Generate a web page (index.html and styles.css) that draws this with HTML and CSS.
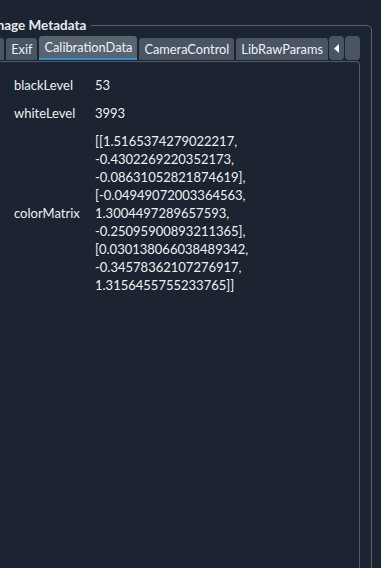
FILE: index.html
```html
<!DOCTYPE html>
<html lang="en">
<head>
    <meta charset="UTF-8">
    <meta name="viewport" content="width=device-width, initial-scale=1.0">
    <title>Image Metadata</title>
    <link rel="stylesheet" href="styles.css">
</head>
<body>
    <fieldset class="metadata">
        <legend>Image Metadata</legend>
        <div class="tabbar">
            <div class="tabs">
                <div class="tab">Info</div>
                <div class="tab">Exif</div>
                <div class="tab active">CalibrationData</div>
                <div class="tab">CameraControl</div>
                <div class="tab">LibRawParams</div>
            </div>
            <div class="scroll-btns">
                <button class="scroll-btn">
                    <svg width="6" height="9" viewBox="0 0 6 9"><path d="M5 0 L5 9 L0 4.5 Z" fill="#f5f8fa"/></svg>
                </button>
                <button class="scroll-btn"></button>
            </div>
        </div>
        <div class="panel">
            <div class="rows">
                <div class="key">blackLevel</div>
                <div class="val">53</div>
                <div class="key">whiteLevel</div>
                <div class="val">3993</div>
                <div class="key">colorMatrix</div>
                <div class="val">[[1.5165374279022217,<br>-0.4302269220352173,<br>-0.08631052821874619],<br>[-0.04949072003364563,<br>1.3004497289657593,<br>-0.25095900893211365],<br>[0.030138066038489342,<br>-0.34578362107276917,<br>1.3156455755233765]]</div>
            </div>
        </div>
    </fieldset>
</body>
</html>
```

FILE: styles.css
```css
body {
    margin: 0;
    background-color: #1b2430;
    color: #eef1f4;
    font-family: Lato, "Noto Sans", sans-serif;
    font-size: 13px;
    overflow: hidden;
    height: 568px;
}
.metadata {
    margin: 17px 0 0 -40px;
    width: 412px;
    min-width: 0;
    height: 560px;
    border: 1px solid #56616d;
    border-radius: 0 5px 0 0;
    padding: 3px 11px 0 12px;
    box-sizing: border-box;
}
.metadata legend {
    font-weight: bold;
    font-size: 13.5px;
    padding: 0 5px 0 0;
    margin-left: 16px;
    color: #e8ebee;
}
.tabbar {
    display: flex;
    align-items: flex-end;
    height: 24px;
}
.tabs {
    flex: 1;
    min-width: 0;
    display: flex;
    justify-content: flex-end;
    align-items: flex-end;
    gap: 2px;
    overflow: hidden;
    height: 24px;
}
.tab {
    flex-shrink: 0;
    height: 22px;
    line-height: 22px;
    padding: 0 5px;
    font-size: 12.8px;
    background-color: #4a5563;
    border-radius: 3px 3px 0 0;
    white-space: nowrap;
}
.tab.active {
    height: 24px;
    line-height: 23px;
    background-color: #586470;
    box-shadow: inset 0 -2px 0 #2b95d6;
}
.scroll-btns {
    display: flex;
    height: 24px;
    margin-left: 1px;
}
.scroll-btn {
    width: 15px;
    height: 24px;
    padding: 0;
    border: none;
    background-color: #4a5563;
    border-radius: 4px;
    display: flex;
    align-items: center;
    justify-content: center;
}
.scroll-btn + .scroll-btn {
    margin-left: 1px;
}
.panel {
    margin-top: 1px;
    border: 1px solid #4f5a66;
    border-bottom: none;
    border-radius: 0 4px 0 0;
    height: 520px;
    padding-top: 9px;
}
.rows {
    display: grid;
    grid-template-columns: 81px auto;
    padding-left: 40px;
    line-height: 18px;
}
.key, .val {
    padding: 5px 0;
}
.key {
    align-self: center;
}
```
